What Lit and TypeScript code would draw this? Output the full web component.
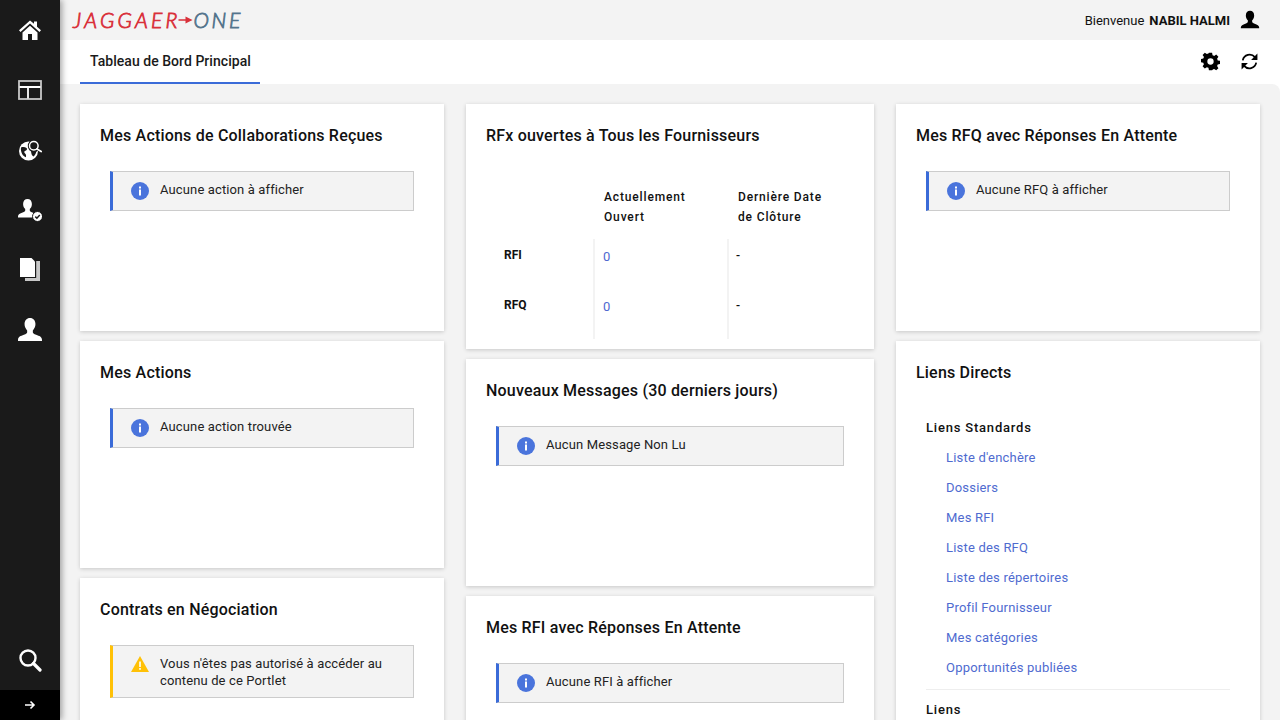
import {LitElement, html, css, svg} from 'lit';
import {customElement} from 'lit/decorators.js';

const personPath = 'M12 1c3 0 5 2.300 5 5.600 0 2.400-1 4.500-2.400 5.800v1.700c0 1 .9 1.500 3 2.300 3 1.100 5.400 1.900 5.400 4.600v1H1v-1c0-2.700 2.400-3.500 5.400-4.600 2.100-.8 3-1.300 3-2.300v-1.700C8 11.100 7 9 7 6.600 7 3.300 9 1 12 1z';

const icons = {
  home: svg`<path d="M12 2.500 1 12.200l1.500 1.700L12 5.500l9.500 8.400 1.500-1.700-4-3.500V3.500h-3v2.300z" fill="#fff"/><path d="M4.500 14.500 12 7.800l7.500 6.700v7.500h-5.500v-6h-4v6H4.500z" fill="#fff"/>`,
  layout: svg`<rect x="1" y="3" width="22" height="18" fill="none" stroke="#c8c8c8" stroke-width="1.800"/><path d="M1.500 9h21M10 9v11.500" stroke="#fff" stroke-width="1.800" fill="none"/>`,
  globe: svg`<circle cx="10.500" cy="13" r="9.500" fill="#fff"/><path d="M3 9.500c2-.8 4-.6 5.500.6 1.100 1 .4 2.400-1 2.700-1.600.3-1.500 1.800-.4 2.600 1 .8 1.200 2.100.8 3.800-2.600-.6-5.600-4.800-4.900-9.700zM13 13c1.800-.6 3.800-.3 5.300.5-.3 2-1.300 3.800-2.800 5-1.400-.6-2.300-2.300-2.500-5.500z" fill="#1a1a1a"/><circle cx="16" cy="8" r="6.200" fill="#1a1a1a"/><circle cx="15.800" cy="7.800" r="4.300" fill="none" stroke="#fff" stroke-width="1.500"/><path d="m19 11 4.200 2.500" stroke="#fff" stroke-width="1.800" stroke-linecap="round"/>`,
  personCheck: svg`<path d="M9.500 1c2.600 0 4.400 2 4.400 4.900 0 2.100-.8 3.900-2.100 5v1.500c0 .8.700 1.300 2.600 2 2.600.9 4.600 1.700 4.600 4.100v.9H0v-.9c0-2.400 2-3.200 4.600-4.100 1.900-.7 2.600-1.200 2.600-2v-1.500c-1.300-1.100-2.100-2.900-2.100-5C5.100 3 6.900 1 9.500 1z" fill="#fff"/><circle cx="19.500" cy="18.500" r="5" fill="#fff" stroke="#1a1a1a" stroke-width="1"/><path d="m17.300 18.600 1.600 1.600 2.900-3.100" fill="none" stroke="#1a1a1a" stroke-width="1.500"/>`,
  docs: svg`<rect x="7" y="3" width="15" height="20" fill="#c8c8c8"/><rect x="2" y="0" width="16.200" height="20" fill="#1a1a1a"/><path d="M2 0h11.500L17 3.500V19H2z" fill="#fff"/>`,
  person: svg`<path d="${personPath}" fill="#fff" transform="translate(12 12) scale(1.090) translate(-12 -12)"/>`,
  search: svg`<circle cx="10" cy="10" r="7.500" fill="none" stroke="#fff" stroke-width="2.400"/><path d="m15.500 15.500 6.500 6.500" stroke="#fff" stroke-width="3.200" stroke-linecap="round"/>`,
  arrow: svg`<path d="M2 12h18M13 5 20 12l-7 7" fill="none" stroke="#fff" stroke-width="3.200"/>`,
  gear: svg`<path d="M10 1h4l.6 3a8 8 0 0 1 2 .9l2.600-1.700 2.800 2.800-1.700 2.600a8 8 0 0 1 .8 2l3 .6v4l-3 .6a8 8 0 0 1-.8 2l1.700 2.600-2.800 2.800-2.600-1.700a8 8 0 0 1-2 .8L14 23h-4l-.6-3a8 8 0 0 1-2-.8l-2.600 1.700L2 18.100l1.700-2.600a8 8 0 0 1-.8-2l-3-.6v-4l3-.6a8 8 0 0 1 .9-2L2 3.700 4.800.9l2.600 1.700a8 8 0 0 1 2-.8zM12 8a4 4 0 1 0 0 8 4 4 0 0 0 0-8z" fill="#000" fill-rule="evenodd"/>`,
  refresh: svg`<path d="M3.500 10.500A8.800 8.800 0 0 1 18.800 6.500M20.500 13.500A8.800 8.800 0 0 1 5.200 17.500" fill="none" stroke="#000" stroke-width="2.200"/><path d="M22 2v8h-8zM2 22v-8h8z" fill="#000"/>`,
};

const links = ["Liste d'enchère", 'Dossiers', 'Mes RFI', 'Liste des RFQ', 'Liste des répertoires', 'Profil Fournisseur', 'Mes catégories', 'Opportunités publiées'];

@customElement('app-root')
export class AppRoot extends LitElement {
  static styles = css`
    :host{
      display:flex;
      width:1280px;
      height:720px;
      overflow:hidden;
      background:#f3f3f3;
      font-family:Roboto,sans-serif;
      color:#111;
    }
    .side{
      width:60px;
      flex:none;
      display:flex;
      flex-direction:column;
      background:#1a1a1a;
      box-shadow:2px 0 6px rgba(0,0,0,0.35);
      z-index:2;
    }
    .nav{
      height:60px;
      display:flex;
      align-items:center;
      justify-content:center;
    }
    .nav svg{width:24px;height:24px;display:block;}
    .grow{flex:1;}
    .expand{
      height:30px;
      background:#000;
      display:flex;
      align-items:center;
      justify-content:center;
    }
    .expand svg{width:12px;height:12px;display:block;}
    .main{
      flex:1;
      min-width:0;
      display:flex;
      flex-direction:column;
      background:#fff;
    }
    .top{
      height:40px;
      flex:none;
      display:flex;
      align-items:center;
      justify-content:space-between;
      padding:0 20px 0 13px;
      background:#f3f3f3;
    }
    .logo{
      display:flex;
      align-items:center;
      font-family:Lato,sans-serif;
      font-size:21px;
      font-weight:300;
      line-height:20px;
    }
    .logo .red{color:#d9303a;font-style:italic;letter-spacing:3.200px;-webkit-text-stroke:.8px #d9303a;}
    .logo .blue{color:#54748c;font-style:italic;letter-spacing:2.600px;-webkit-text-stroke:.8px #54748c;}
    .logo svg{width:15px;height:8px;display:block;margin:0 1px 0 -3px;}
    .user{
      display:flex;
      align-items:center;
      font-size:13px;
    }
    .user b{font-weight:700;margin-left:5px;}
    .user svg{width:20px;height:20px;margin-left:10px;display:block;}
    .tabs{
      height:44px;
      flex:none;
      background:#fff;
      display:flex;
      align-items:stretch;
      padding:0 21px 0 20px;
    }
    .tab{
      width:180px;
      box-sizing:border-box;
      padding:12px 0 0 10px;
      border-bottom:2px solid #3a6bd8;
      font-size:14px;
      font-weight:500;
      line-height:18px;
      letter-spacing:.04px;
      color:#1a1a1a;
    }
    .tools{
      margin-left:auto;
      display:flex;
      align-items:center;
      gap:20px;
      padding-bottom:2px;
    }
    .tools svg{width:19px;height:19px;display:block;}
    .content{
      flex:1;
      min-height:0;
      overflow:hidden;
      background:#f3f3f3;
      display:grid;
      grid-template-columns:364px 408px 364px;
      gap:22px;
      padding:20px 20px 0;
      border-top-right-radius:8px;
    }
    .col{
      display:flex;
      flex-direction:column;
      gap:10px;
    }
    .card{
      background:#fff;
      box-shadow:0 1px 4px rgba(0,0,0,0.18);
      box-sizing:border-box;
      height:227px;
      flex:none;
      padding:21px 20px 20px;
    }
    .card.rfx{height:245px;}
    .card.links{height:420px;}
    h2{
      margin:0;
      font-size:16px;
      font-weight:500;
      line-height:22px;
      letter-spacing:.2px;
      color:#111;
    }
    .alert{
      margin:24px 10px 0;
      box-sizing:border-box;
      min-height:40px;
      display:flex;
      align-items:center;
      background:#f3f3f3;
      border:1px solid #ccc;
      border-left:3px solid #3a6bd8;
      padding:0 18px;
      font-size:13px;
      line-height:17px;
      letter-spacing:.13px;
      color:#222;
    }
    .alert svg{width:18px;height:18px;flex:none;margin-right:11px;display:block;}
    .alert span{margin-bottom:4px;}
    .alert.warn{
      border-left-color:#ffc107;
      min-height:53px;
      align-items:flex-start;
      padding-top:9px;
    }
    .alert.warn span{margin:0;}
    .table{
      margin-top:40px;
      display:grid;
      grid-template-columns:107px 134px 127px;
      grid-template-rows:52px 50px 50px;
      font-size:12px;
      letter-spacing:.85px;
      line-height:20px;
      color:#111;
    }
    .head{
      font-weight:500;
      padding-left:11px;
      box-sizing:border-box;
    }
    .name{
      font-weight:700;
      letter-spacing:0;
      padding:6px 0 0 18px;
    }
    .num{
      border-left:2px solid #f3f3f3;
      padding:8px 0 0 8px;
      font-size:13px;
      letter-spacing:0;
      color:#5068d0;
    }
    .dash{
      border-left:2px solid #f3f3f3;
      padding:7px 0 0 7px;
      letter-spacing:0;
      font-weight:500;
    }
    .group{
      margin:34px 10px 5px;
      font-size:13px;
      font-weight:500;
      line-height:20px;
      letter-spacing:.8px;
    }
    .linklist{
      display:flex;
      flex-direction:column;
      margin:0 10px 0 30px;
    }
    .linklist a{
      height:30px;
      line-height:30px;
      font-size:13px;
      letter-spacing:.2px;
      color:#4f6bd0;
      text-decoration:none;
    }
    hr{
      border:0;
      border-top:1px solid #eee;
      margin:6px 10px 0;
    }
    .group.second{margin-top:10px;}
  `;

  private icon(body: unknown) {
    return html`<svg viewBox="0 0 24 24">${body}</svg>`;
  }

  private alert(text: string) {
    return html`<div class="alert">
      <svg viewBox="0 0 18 18"><circle cx="9" cy="9" r="9" fill="#4a74dc"/><rect x="8" y="7.500" width="2" height="6" fill="#fff"/><rect x="8" y="4.500" width="2" height="2" fill="#fff"/></svg>
      <span>${text}</span>
    </div>`;
  }

  render() {
    return html`
      <div class="side">
        <div class="nav">${this.icon(icons.home)}</div>
        <div class="nav">${this.icon(icons.layout)}</div>
        <div class="nav">${this.icon(icons.globe)}</div>
        <div class="nav">${this.icon(icons.personCheck)}</div>
        <div class="nav">${this.icon(icons.docs)}</div>
        <div class="nav">${this.icon(icons.person)}</div>
        <div class="grow"></div>
        <div class="nav">${this.icon(icons.search)}</div>
        <div class="expand">${this.icon(icons.arrow)}</div>
      </div>
      <div class="main">
        <div class="top">
          <div class="logo">
            <span class="red">JAGGAER</span>
            <svg viewBox="0 0 14 8"><path d="M0 3.300h7V.5L14 4 7 7.500V4.700H0z" fill="#d9303a"/></svg>
            <span class="blue">ONE</span>
          </div>
          <div class="user">
            <span>Bienvenue</span><b>NABIL HALMI</b>
            <svg viewBox="0 0 24 24"><path d="${personPath}" fill="#000"/></svg>
          </div>
        </div>
        <div class="tabs">
          <div class="tab">Tableau de Bord Principal</div>
          <div class="tools">
            ${this.icon(icons.gear)}
            ${this.icon(icons.refresh)}
          </div>
        </div>
        <div class="content">
          <div class="col">
            <div class="card">
              <h2>Mes Actions de Collaborations Reçues</h2>
              ${this.alert('Aucune action à afficher')}
            </div>
            <div class="card">
              <h2>Mes Actions</h2>
              ${this.alert('Aucune action trouvée')}
            </div>
            <div class="card">
              <h2>Contrats en Négociation</h2>
              <div class="alert warn">
                <svg viewBox="0 0 18 18"><path d="M9 1 18 17H0z" fill="#ffc107"/><rect x="8.200" y="6.500" width="1.600" height="5.500" fill="#fff"/><rect x="8.200" y="13" width="1.600" height="1.800" fill="#fff"/></svg>
                <span>Vous n'êtes pas autorisé à accéder au contenu de ce Portlet</span>
              </div>
            </div>
          </div>
          <div class="col">
            <div class="card rfx">
              <h2>RFx ouvertes à Tous les Fournisseurs</h2>
              <div class="table">
                <div></div>
                <div class="head">Actuellement<br>Ouvert</div>
                <div class="head">Dernière Date<br>de Clôture</div>
                <div class="name">RFI</div>
                <div class="num">0</div>
                <div class="dash">-</div>
                <div class="name">RFQ</div>
                <div class="num">0</div>
                <div class="dash">-</div>
              </div>
            </div>
            <div class="card">
              <h2>Nouveaux Messages (30 derniers jours)</h2>
              ${this.alert('Aucun Message Non Lu')}
            </div>
            <div class="card">
              <h2>Mes RFI avec Réponses En Attente</h2>
              ${this.alert('Aucune RFI à afficher')}
            </div>
          </div>
          <div class="col">
            <div class="card">
              <h2>Mes RFQ avec Réponses En Attente</h2>
              ${this.alert('Aucune RFQ à afficher')}
            </div>
            <div class="card links">
              <h2>Liens Directs</h2>
              <div class="group">Liens Standards</div>
              <div class="linklist">
                ${links.map((l) => html`<a href="#">${l}</a>`)}
              </div>
              <hr>
              <div class="group second">Liens</div>
            </div>
          </div>
        </div>
      </div>
    `;
  }
}
